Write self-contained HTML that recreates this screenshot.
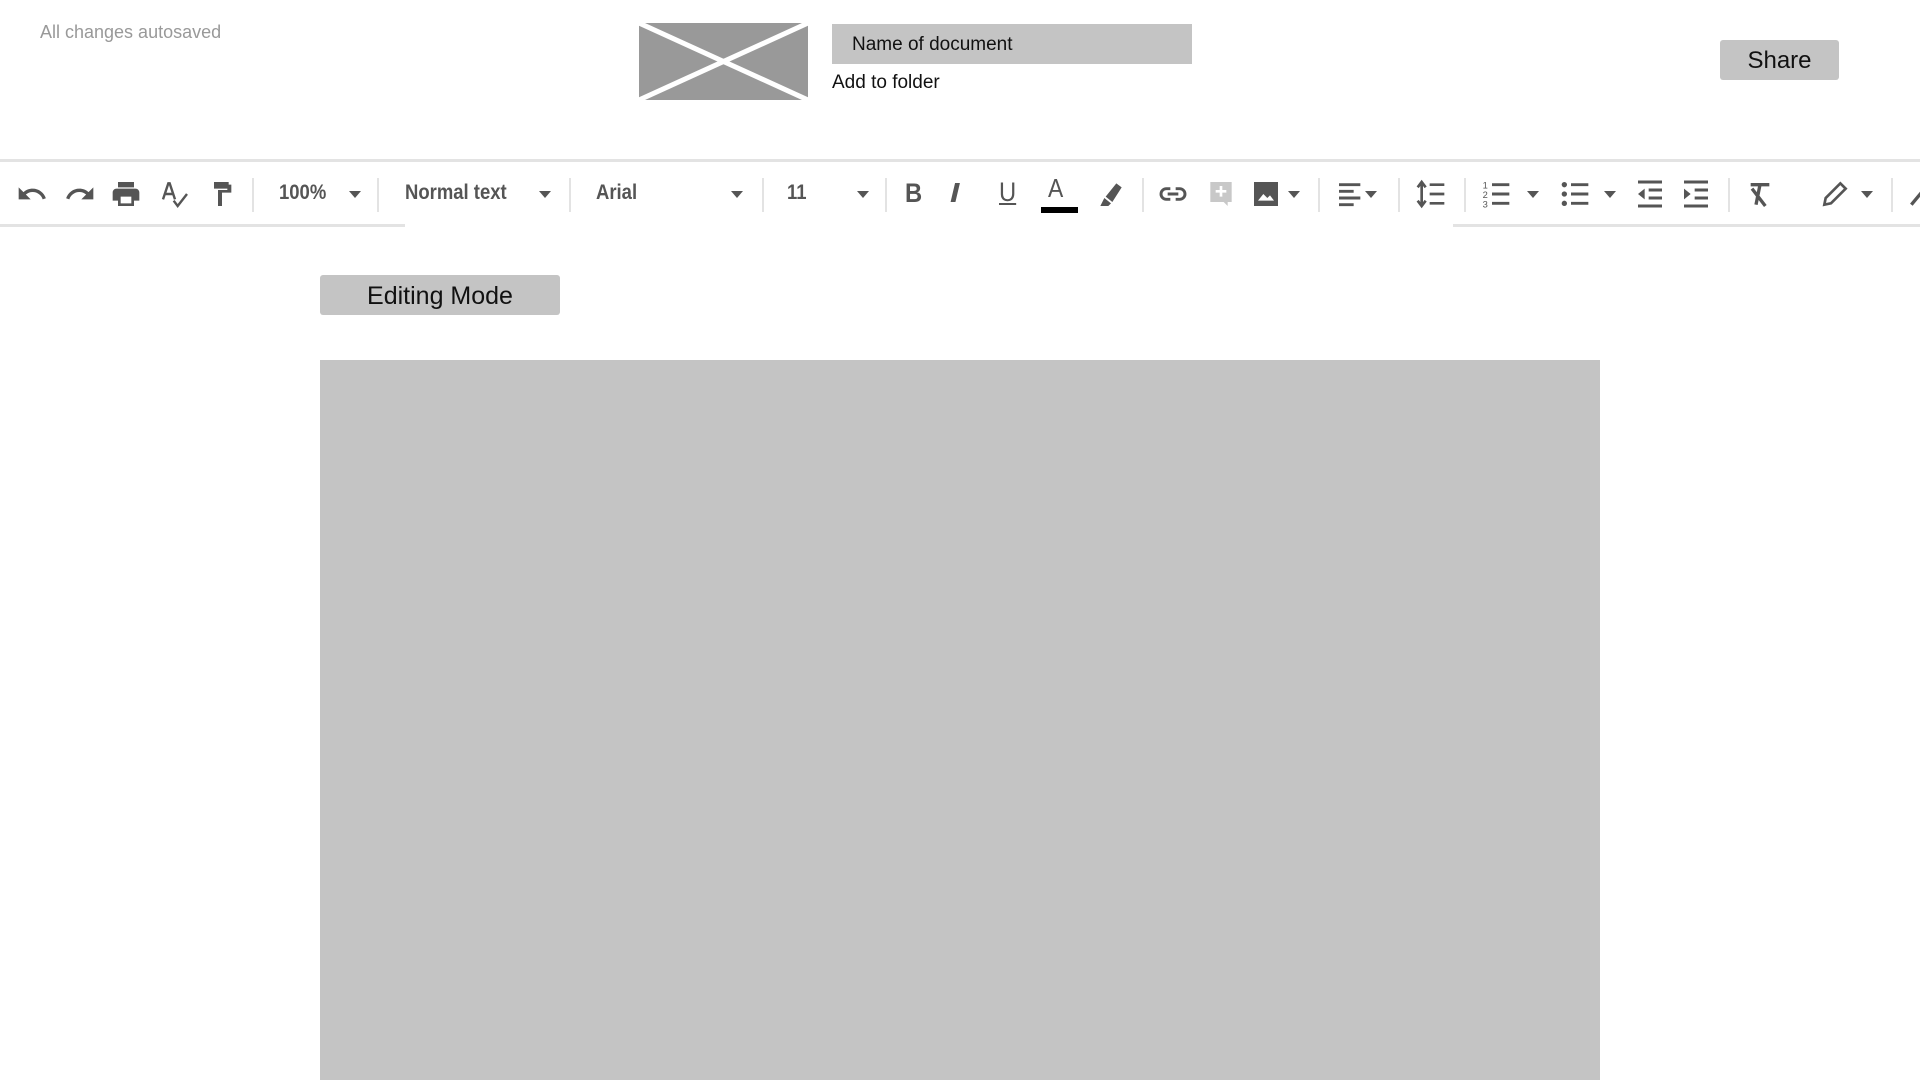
<!DOCTYPE html>
<html><head><style>
*{margin:0;padding:0;box-sizing:border-box}
body{width:1920px;height:1080px;background:#fff;position:relative;overflow:hidden;font-family:"Liberation Sans",sans-serif}
.a{position:absolute}
.t{position:absolute;color:#555;font-size:21px;top:181px;font-weight:bold;transform:scaleX(.88);transform-origin:left}
.sep{position:absolute;top:178px;width:2px;height:34px;background:#e3e3e3}
.dd{position:absolute;top:191px;width:0;height:0;border-left:6px solid transparent;border-right:6px solid transparent;border-top:7px solid #555}
svg.i{position:absolute;top:178px;width:32px;height:32px}
</style></head><body>
<div class="a" style="left:40px;top:22px;font-size:18px;color:#999">All changes autosaved</div>
<svg class="a" style="left:639px;top:23px" width="169" height="77"><rect width="169" height="77" fill="#999"/><path d="M0 0L169 77M169 0L0 77" stroke="#fff" stroke-width="5"/></svg>
<div class="a" style="left:832px;top:24px;width:360px;height:40px;background:#c4c4c4"></div>
<div class="a" style="left:852px;top:34px;font-size:19px;color:#111">Name of document</div>
<div class="a" style="left:832px;top:72px;font-size:19px;color:#111">Add to folder</div>
<div class="a" style="left:1720px;top:40px;width:119px;height:40px;background:#c4c4c4;border-radius:3px;font-size:24px;color:#111;text-align:center;line-height:42px">Share</div>

<div class="a" style="left:0;top:159px;width:1920px;height:3px;background:#e3e3e3"></div>
<div class="a" style="left:0;top:224px;width:405px;height:3px;background:#e3e3e3"></div>
<div class="a" style="left:1453px;top:224px;width:467px;height:3px;background:#e3e3e3"></div>

<svg class="i" style="left:16px" viewBox="0 0 24 24"><path d="M12.5 8c-2.65 0-5.05 1-6.9 2.6L2 7v9h9l-3.6-3.6c1.4-1.2 3.2-1.9 5.1-1.9 3.5 0 6.5 2.3 7.5 5.5l2.4-.8C21 11 17.1 8 12.5 8z" fill="#555"/></svg>
<svg class="i" style="left:64px" viewBox="0 0 24 24"><path d="M18.4 10.6C16.6 9 14.2 8 11.5 8 6.9 8 3 11 1.6 15.2l2.4.8c1-3.2 4-5.5 7.5-5.5 1.9 0 3.7.7 5.1 1.9L13 16h9V7z" fill="#555"/></svg>
<svg class="i" style="left:110px" viewBox="0 0 24 24"><path d="M19 8H5c-1.7 0-3 1.3-3 3v6h4v4h12v-4h4v-6c0-1.7-1.3-3-3-3zm-3 11H8v-5h8v5zM18 3H6v4h12z" fill="#555"/></svg>
<svg class="i" style="left:159px" viewBox="0 0 24 24"><path d="M3 16L7 4h1l4 12M4.5 12h6" stroke="#555" stroke-width="1.8" fill="none"/><path d="M11 17l3 4 7-9" stroke="#555" stroke-width="1.8" fill="none"/></svg>
<svg class="i" style="left:206px" viewBox="0 0 24 24"><path d="M6 3h11v5H6zM17 5h2v6h-7v10h-3V9h7V5" fill="#555"/></svg>
<div class="sep" style="left:252px"></div>
<div class="t" style="left:279px">100%</div><div class="dd" style="left:349px"></div>
<div class="sep" style="left:377px"></div>
<div class="t" style="left:405px">Normal text</div><div class="dd" style="left:539px"></div>
<div class="sep" style="left:569px"></div>
<div class="t" style="left:596px">Arial</div><div class="dd" style="left:731px"></div>
<div class="sep" style="left:762px"></div>
<div class="t" style="left:787px">11</div><div class="dd" style="left:857px"></div>
<div class="sep" style="left:885px"></div>
<div class="t" style="left:905px;font-size:27px;top:178px">B</div>
<div class="t" style="left:950px;font-size:28px;top:177px;font-style:italic;font-weight:bold;transform:scaleX(1.2)">I</div>
<div class="t" style="left:999px;font-size:27px;top:177px;font-weight:normal;text-decoration:underline">U</div>
<div class="t" style="left:1048px;font-size:26px;top:173px;font-weight:normal">A</div>
<div class="a" style="left:1041px;top:207px;width:37px;height:6px;background:#000"></div>
<svg class="i" style="left:1095px" viewBox="0 0 24 24"><path d="M8 14l8-10 4 3-7 11zM7 15l5 4-2 2H4z" fill="#555"/></svg>
<div class="sep" style="left:1142px"></div>
<svg class="i" style="left:1157px" viewBox="0 0 24 24"><path d="M10 8H7a4 4 0 000 8h3M14 8h3a4 4 0 010 8h-3M8 12h8" stroke="#555" stroke-width="2.2" fill="none"/></svg>
<svg class="i" style="left:1205px" viewBox="0 0 24 24"><path d="M4 3h16v15h-3v3l-3-3H4z" fill="#c8c8c8"/><path d="M12 6v8M8 10h8" stroke="#fff" stroke-width="2"/></svg>
<svg class="i" style="left:1250px" viewBox="0 0 24 24"><rect x="3" y="3" width="18" height="18" fill="#555"/><path d="M6 17l4-5 3 3 2-2 3 4z" fill="#fff"/></svg>
<div class="dd" style="left:1288px"></div>
<div class="sep" style="left:1318px"></div>
<svg class="i" style="left:1335px" viewBox="0 0 24 24"><path d="M3 5h16M3 10h11M3 15h16M3 20h11" stroke="#555" stroke-width="2.2"/></svg>
<div class="dd" style="left:1365px"></div>
<div class="sep" style="left:1398px"></div>
<svg class="i" style="left:1415px" viewBox="0 0 24 24"><path d="M5 4v16M2 7l3-4 3 4M2 17l3 4 3-4M11 5h11M11 12h11M11 19h11" stroke="#555" stroke-width="2" fill="none"/></svg>
<div class="sep" style="left:1464px"></div>
<svg class="i" style="left:1480px" viewBox="0 0 24 24"><path d="M9 5h13M9 12h13M9 19h13" stroke="#555" stroke-width="2.2"/><text x="2" y="8" font-size="7" fill="#555">1</text><text x="2" y="15" font-size="7" fill="#555">2</text><text x="2" y="22" font-size="7" fill="#555">3</text></svg>
<div class="dd" style="left:1527px"></div>
<svg class="i" style="left:1559px" viewBox="0 0 24 24"><circle cx="4" cy="5" r="2" fill="#555"/><circle cx="4" cy="12" r="2" fill="#555"/><circle cx="4" cy="19" r="2" fill="#555"/><path d="M9 5h13M9 12h13M9 19h13" stroke="#555" stroke-width="2.2"/></svg>
<div class="dd" style="left:1604px"></div>
<svg class="i" style="left:1634px" viewBox="0 0 24 24"><path d="M3 3h18M11 9h10M11 15h10M3 21h18" stroke="#555" stroke-width="2.2"/><path d="M8 8l-5 4 5 4z" fill="#555"/></svg>
<svg class="i" style="left:1680px" viewBox="0 0 24 24"><path d="M3 3h18M11 9h10M11 15h10M3 21h18" stroke="#555" stroke-width="2.2"/><path d="M3 8l5 4-5 4z" fill="#555"/></svg>
<div class="sep" style="left:1728px"></div>
<svg class="i" style="left:1744px" viewBox="0 0 24 24"><path d="M5 5h14M12 5l-3 15M6 8l10 13" stroke="#555" stroke-width="2.5" fill="none"/></svg>
<svg class="i" style="left:1819px" viewBox="0 0 24 24"><path d="M4 20l1-5L16 4l4 4L9 19z" stroke="#555" stroke-width="2" fill="none"/></svg>
<div class="dd" style="left:1861px"></div>
<div class="sep" style="left:1891px"></div>
<svg class="i" style="left:1906px" viewBox="0 0 24 24"><path d="M4 20L14 8" stroke="#555" stroke-width="2.5"/></svg>

<div class="a" style="left:320px;top:275px;width:240px;height:40px;background:#c4c4c4;border-radius:3px;font-size:25px;color:#111;text-align:center;line-height:42px">Editing Mode</div>
<div class="a" style="left:320px;top:360px;width:1280px;height:720px;background:#c4c4c4"></div>
</body></html>
